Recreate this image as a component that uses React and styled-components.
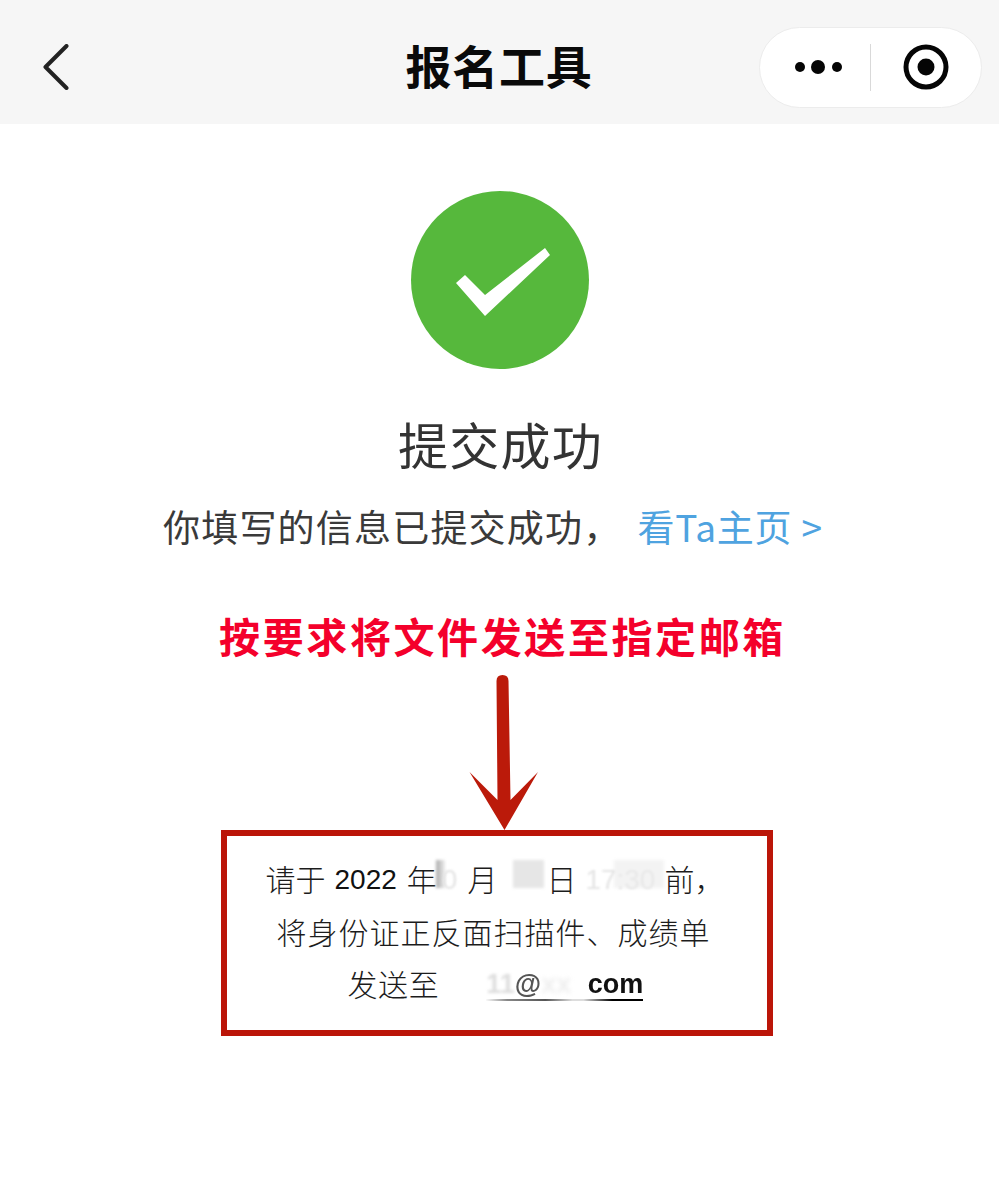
import React from "react";
import styled, { createGlobalStyle } from "styled-components";

const CJK = `"Noto Sans CJK SC", "Liberation Sans", sans-serif`;
const LATIN = `"Liberation Sans", "Noto Sans CJK SC", sans-serif`;

const GlobalStyle = createGlobalStyle`
  html, body {
    margin: 0;
    padding: 0;
    background: #fff;
    overflow: hidden;
  }
  * {
    box-sizing: border-box;
  }
`;

const Page = styled.div`
  width: 999px;
  height: 1199px;
  display: flex;
  flex-direction: column;
  align-items: center;
  background: #fff;
  font-family: ${CJK};
`;

const NavBar = styled.header`
  width: 100%;
  height: 124px;
  flex: none;
  display: grid;
  grid-template-columns: 1fr auto 1fr;
  align-items: center;
  padding: 10px 17px 0;
  background: #f6f6f6;
`;

const NavTitle = styled.h1`
  margin: 0;
  padding: 0 1px 6px 0;
  font-size: 46px;
  line-height: 1;
  font-weight: 700;
  letter-spacing: 0.8px;
  color: #0a0a0a;
  white-space: nowrap;
`;

const BackIcon = styled.svg`
  display: block;
  width: 26px;
  height: 46px;
  margin-left: 26px;
`;

const Capsule = styled.div`
  justify-self: end;
  width: 223px;
  height: 81px;
  display: flex;
  align-items: center;
  border: 1px solid #ececec;
  border-radius: 41px;
  background: #fff;
`;

const CapsuleCell = styled.div`
  flex: 1;
  display: flex;
  justify-content: center;
  align-items: center;
`;

const CapsuleRule = styled.div`
  width: 1px;
  height: 47px;
  background: #d9d9d9;
`;

const DotsIcon = styled.svg`
  display: block;
  margin-left: 7px;
`;

const Success = styled.svg`
  display: block;
  flex: none;
  width: 178px;
  height: 178px;
  margin-top: 67px;
`;

const Heading = styled.h2`
  margin: 44px 0 0 2px;
  font-size: 50px;
  line-height: 60px;
  font-weight: 400;
  letter-spacing: 1.2px;
  color: #333;
`;

const Notice = styled.p`
  margin: 28px 0 0;
  width: 100%;
  padding-left: 163px;
  display: flex;
  font-size: 37px;
  line-height: 50px;
  letter-spacing: 1.2px;
  color: #3a3a3a;
`;

const NoticeLink = styled.span`
  margin-left: 16px;
  letter-spacing: 0.8px;
  color: #4fa3e0;
`;

const Callout = styled.p`
  margin: 59px 0 0 6px;
  font-size: 41px;
  line-height: 50px;
  font-weight: 700;
  letter-spacing: 2.6px;
  color: #f4002b;
`;

const Arrow = styled.svg`
  display: block;
  flex: none;
  width: 80px;
  height: 157px;
  margin-top: 14px;
`;

const InfoBox = styled.section`
  width: 552px;
  height: 206px;
  flex: none;
  margin: -1px 6px 0 0;
  padding-top: 16px;
  display: flex;
  flex-direction: column;
  border: 6px solid #bb1508;
  font-size: 30px;
  color: #1c1c1c;
  font-weight: 300;
`;

const InfoLine = styled.div`
  height: 52.5px;
  display: flex;
  align-items: center;
  white-space: nowrap;
  padding-left: ${(props) => props.$inset}px;
  letter-spacing: ${(props) => props.$spacing || 0}px;
`;

const Piece = styled.span`
  flex: none;
  margin-left: ${(props) => props.$gap || 0}px;
`;

const Digits = styled.span`
  flex: none;
  margin-left: ${(props) => props.$gap || 0}px;
  padding-top: 3px;
  font-family: ${LATIN};
  font-size: 28px;
  font-weight: 400;
  color: #111;
`;

const Faded = styled.span`
  flex: none;
  margin-left: ${(props) => props.$gap || 0}px;
  padding-top: 3px;
  font-family: ${LATIN};
  font-size: 28px;
  font-weight: 400;
  color: #e4e4e4;
  filter: blur(1.2px);
`;

const Smudge = styled.span`
  flex: none;
  width: ${(props) => props.$width}px;
  height: 28px;
  margin-left: ${(props) => props.$gap || 0}px;
  margin-bottom: 8px;
  background: ${(props) => props.$fill};
  filter: blur(1.5px);
`;

const Email = styled.span`
  flex: none;
  display: flex;
  align-items: center;
  width: 157px;
  height: 36px;
  padding-top: 5px;
  margin-left: ${(props) => props.$gap}px;
  border-bottom: 2px solid;
  border-image: linear-gradient(90deg, #fff 0%, #888 14%, #555 38%, #ddd 55%, #ddd 62%, #000 80%) 1;
  font-family: ${LATIN};
  font-weight: 700;
  font-size: 27px;
  letter-spacing: 0;
  color: #111;
`;

const BlurredMail = styled.span`
  color: ${(props) => props.$tone};
  filter: blur(${(props) => props.$blur}px);
  margin-left: ${(props) => (props.$push ? "auto" : "0")};
`;

export default function App() {
  return (
    <Page>
      <GlobalStyle />
      <NavBar>
        <BackIcon viewBox="0 0 26 46">
          <path d="M23.5 2 L2.5 23 L23.5 44" fill="none" stroke="#222" strokeWidth="4" strokeLinecap="round" strokeLinejoin="round" />
        </BackIcon>
        <NavTitle>报名工具</NavTitle>
        <Capsule>
          <CapsuleCell>
            <DotsIcon width="50" height="20" viewBox="0 0 50 20">
              <circle cx="6" cy="10" r="5" fill="#050505" />
              <circle cx="24" cy="10" r="7" fill="#050505" />
              <circle cx="43" cy="10" r="5" fill="#050505" />
            </DotsIcon>
          </CapsuleCell>
          <CapsuleRule />
          <CapsuleCell>
            <svg width="48" height="48" viewBox="0 0 48 48">
              <circle cx="24" cy="24" r="20" fill="none" stroke="#050505" strokeWidth="5" />
              <circle cx="24" cy="24" r="8.5" fill="#050505" />
            </svg>
          </CapsuleCell>
        </Capsule>
      </NavBar>

      <Success viewBox="0 0 178 178">
        <circle cx="89" cy="89" r="89" fill="#56b83c" />
        <path d="M45 92 L54 84 L74 104 L134 57 L139 64 L74 125 Z" fill="#fff" />
      </Success>

      <Heading>提交成功</Heading>

      <Notice>
        <span>你填写的信息已提交成功，</span>
        <NoticeLink>看Ta主页 &gt;</NoticeLink>
      </Notice>

      <Callout>按要求将文件发送至指定邮箱</Callout>

      <Arrow viewBox="0 0 80 157">
        <path d="M36.5 7 Q36.5 1 42.5 1 Q48.5 1 48.5 7 L50.5 126 L78 98 L44.5 156 L9.5 98 L37.5 126 Z" fill="#bb1a0a" />
      </Arrow>

      <InfoBox>
        <InfoLine $inset={39}>
          <Piece>请于</Piece>
          <Digits $gap={9}>2022</Digits>
          <Piece $gap={10}>年</Piece>
          <Smudge $width={9} $gap={-1} $fill="linear-gradient(90deg, #aaa, #eee)" />
          <Faded $gap={-3}>0</Faded>
          <Piece $gap={10}>月</Piece>
          <Smudge $width={31} $gap={16} $fill="#e6e6e6" />
          <Piece $gap={2}>日</Piece>
          <Faded $gap={9}>17:30</Faded>
          <Smudge $width={50} $gap={-41} $fill="rgba(235, 235, 235, 0.6)" />
          <Piece>前，</Piece>
        </InfoLine>
        <InfoLine $inset={50} $spacing={1}>
          <Piece>将身份证正反面扫描件、成绩单</Piece>
        </InfoLine>
        <InfoLine $inset={121} $spacing={0.6}>
          <Piece>发送至</Piece>
          <Email $gap={47}>
            <BlurredMail $tone="#ddd" $blur={1.6}>11</BlurredMail>
            <BlurredMail $tone="#555" $blur={0.6}>@</BlurredMail>
            <BlurredMail $tone="#eee" $blur={2}>xx</BlurredMail>
            <BlurredMail $tone="#111" $blur={0} $push>com</BlurredMail>
          </Email>
        </InfoLine>
      </InfoBox>
    </Page>
  );
}
